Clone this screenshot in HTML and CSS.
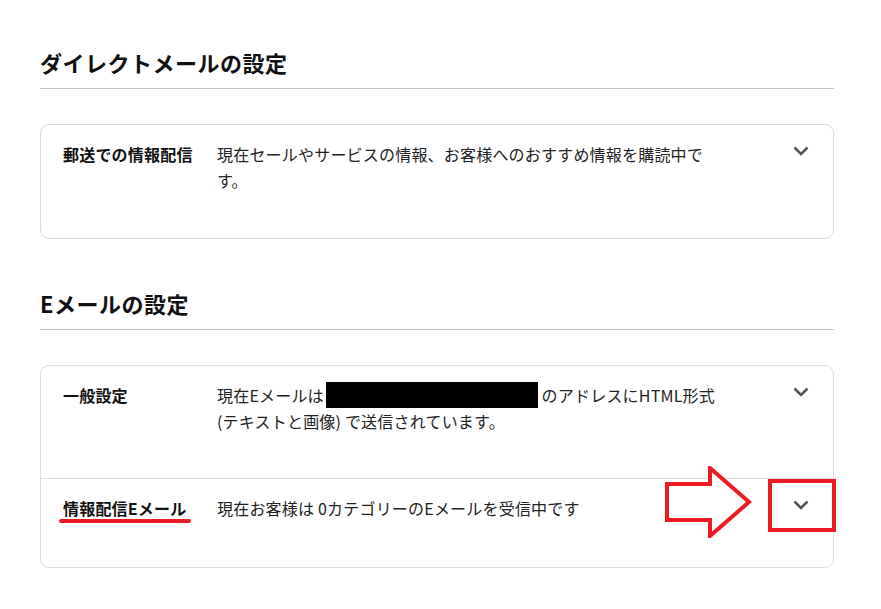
FILE: index.html
```html
<!DOCTYPE html>
<html lang="ja">
<head>
  <meta charset="UTF-8" />
  <meta name="viewport" content="width=device-width, initial-scale=1.0"/>
  <title>メール設定</title>
  <link rel="stylesheet" href="styles.css">
</head>
<body>

  <main class="page">

    <section class="group">
      <h2 class="group-title">ダイレクトメールの設定</h2>
      <div class="card">
        <div class="row">
          <div class="row-label">郵送での情報配信</div>
          <div class="row-text">現在セールやサービスの情報、お客様へのおすすめ情報を購読中です。</div>
          <button class="toggle" aria-label="開く">
            <svg width="16" height="10" viewBox="0 0 16 10"><path d="M1.5 1.5 L8 8 L14.5 1.5" fill="none" stroke="#555" stroke-width="2.5"/></svg>
          </button>
        </div>
      </div>
    </section>

    <section class="group">
      <h2 class="group-title">Eメールの設定</h2>
      <div class="card">
        <div class="row">
          <div class="row-label">一般設定</div>
          <div class="row-text">現在Eメールは<span class="redacted"></span> のアドレスにHTML形式 (テキストと画像) で送信されています。</div>
          <button class="toggle" aria-label="開く">
            <svg width="16" height="10" viewBox="0 0 16 10"><path d="M1.5 1.5 L8 8 L14.5 1.5" fill="none" stroke="#555" stroke-width="2.5"/></svg>
          </button>
        </div>
        <div class="row row-marked">
          <div class="row-label">情報配信Eメール</div>
          <div class="row-text">現在お客様は 0カテゴリーのEメールを受信中です</div>
          <button class="toggle" aria-label="開く">
            <svg width="16" height="10" viewBox="0 0 16 10"><path d="M1.5 1.5 L8 8 L14.5 1.5" fill="none" stroke="#555" stroke-width="2.5"/></svg>
          </button>

          <!-- annotations -->
          <span class="mark-underline"></span>
          <svg class="mark-arrow" width="88" height="72" viewBox="0 0 88 72">
            <polygon points="2,18 45,18 45,2 84,36 45,70 45,54 2,54" fill="#fff" stroke="#ec1c24" stroke-width="4" stroke-linejoin="miter"/>
          </svg>
          <span class="mark-box"></span>
        </div>
      </div>
    </section>

  </main>

</body>
</html>
```

FILE: styles.css
```css
body {
  margin: 0;
  background: #fff;
  color: #222;
  font-family: "Noto Sans CJK JP", "Noto Sans", sans-serif;
}

.page {
  width: 794px;
  padding: 46px 0 0 40px;
}

.group + .group {
  margin-top: 48px;
}

.group-title {
  margin: 0;
  font-size: 22px;
  line-height: 32px;
  font-weight: bold;
  letter-spacing: 0.5px;
  color: #111;
  padding-bottom: 10px;
  border-bottom: 1px solid #c4c4c4;
}

.card {
  margin-top: 35px;
  border: 1px solid #dcdcdc;
  border-radius: 9px;
}

.row {
  display: flex;
  align-items: flex-start;
  padding: 16px 24px 45px 22px;
  font-size: 16px;
  line-height: 26px;
  letter-spacing: 0.2px;
}

.row:not(:last-child) {
  padding-bottom: 44px;
}

.row + .row {
  border-top: 1px solid #dcdcdc;
  padding-bottom: 46px;
}

.row-label {
  width: 154px;
  flex: none;
  font-weight: bold;
  color: #111;
}

.row-text {
  width: 500px;
}

.redacted {
  display: inline-block;
  width: 212px;
  height: 26px;
  margin-left: 2px;
  background: #000;
  vertical-align: top;
}

.toggle {
  margin-left: auto;
  margin-top: 5px;
  padding: 0;
  border: 0;
  background: none;
  width: 16px;
  height: 10px;
  line-height: 0;
}

.row-marked {
  position: relative;
}

.mark-underline {
  position: absolute;
  left: 18px;
  top: 40px;
  width: 132px;
  height: 4px;
  border-radius: 2px;
  background: #ec1c24;
}

.mark-arrow {
  position: absolute;
  left: 624px;
  top: -13px;
}

.mark-box {
  position: absolute;
  left: 727px;
  top: 0;
  width: 68px;
  height: 53px;
  box-sizing: border-box;
  border: 4px solid #ec1c24;
}
```
